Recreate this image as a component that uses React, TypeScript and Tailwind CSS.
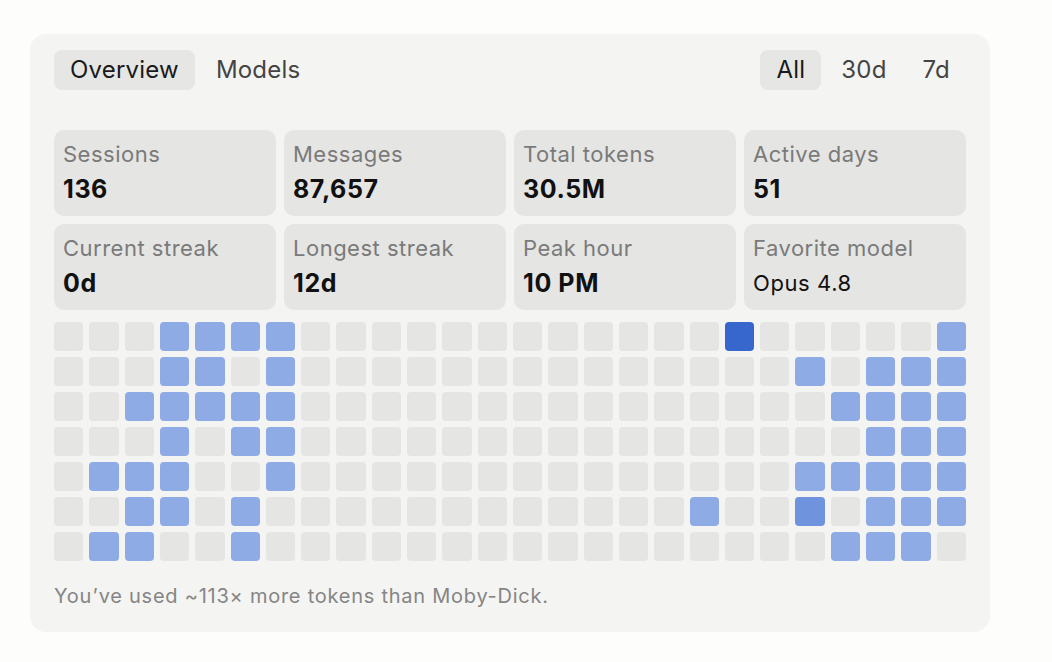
import { useState } from "react";

const FONT = "font-['Inter','Noto_Sans',sans-serif]";

// 0 = empty, 1 = light, 2 = mid, 3 = strong
const GRID: number[][] = [
  [0, 0, 0, 1, 1, 1, 1, 0, 0, 0, 0, 0, 0, 0, 0, 0, 0, 0, 0, 3, 0, 0, 0, 0, 0, 1],
  [0, 0, 0, 1, 1, 0, 1, 0, 0, 0, 0, 0, 0, 0, 0, 0, 0, 0, 0, 0, 0, 1, 0, 1, 1, 1],
  [0, 0, 1, 1, 1, 1, 1, 0, 0, 0, 0, 0, 0, 0, 0, 0, 0, 0, 0, 0, 0, 0, 1, 1, 1, 1],
  [0, 0, 0, 1, 0, 1, 1, 0, 0, 0, 0, 0, 0, 0, 0, 0, 0, 0, 0, 0, 0, 0, 0, 1, 1, 1],
  [0, 1, 1, 1, 0, 0, 1, 0, 0, 0, 0, 0, 0, 0, 0, 0, 0, 0, 0, 0, 0, 1, 1, 1, 1, 1],
  [0, 0, 1, 1, 0, 1, 0, 0, 0, 0, 0, 0, 0, 0, 0, 0, 0, 0, 1, 0, 0, 2, 0, 1, 1, 1],
  [0, 1, 1, 0, 0, 1, 0, 0, 0, 0, 0, 0, 0, 0, 0, 0, 0, 0, 0, 0, 0, 0, 1, 1, 1, 0],
];

const SHADES = ["bg-[#e5e5e3]", "bg-[#8eabe5]", "bg-[#6f94dd]", "bg-[#3767cc]"];

const STATS = [
  { label: "Sessions", value: "136" },
  { label: "Messages", value: "87,657" },
  { label: "Total tokens", value: "30.5M" },
  { label: "Active days", value: "51" },
  { label: "Current streak", value: "0d" },
  { label: "Longest streak", value: "12d" },
  { label: "Peak hour", value: "10 PM" },
  { label: "Favorite model", value: "Opus 4.8", plain: true },
];

const Tab = ({ label, active, onClick }: { label: string; active: boolean; onClick: () => void }) => (
  <button
    onClick={onClick}
    className={`h-10 px-4 rounded-lg text-[24px] tracking-[0.2px] leading-none ${
      active ? "bg-[#e6e6e4] text-[#1a1a1a]" : "text-[#444]"
    }`}
  >
    {label}
  </button>
);

const App = () => {
  const [view, setView] = useState("Overview");
  const [range, setRange] = useState("All");

  return (
    <div className={`min-h-screen w-full bg-[#fdfdfc] pt-[34px] pl-[30px] ${FONT}`}>
      <div className="w-[960px] h-[598px] rounded-2xl bg-[#f4f4f2] px-6 pt-4">
        <div className="flex items-center justify-between">
          <div className="flex gap-[5px]">
            {["Overview", "Models"].map((t) => (
              <Tab key={t} label={t} active={view === t} onClick={() => setView(t)} />
            ))}
          </div>
          <div className="flex gap-[4px]">
            {["All", "30d", "7d"].map((t) => (
              <Tab key={t} label={t} active={range === t} onClick={() => setRange(t)} />
            ))}
          </div>
        </div>

        <div className="mt-10 grid grid-cols-4 gap-2">
          {STATS.map((s) => (
            <div key={s.label} className="h-[86px] rounded-[10px] bg-[#e5e5e3] pl-[9px] pt-[10px]">
              <div className="text-[22px] tracking-[0.5px] leading-7 text-[#7a7a7a]">{s.label}</div>
              <div
                className={`mt-[7px] leading-7 text-[#111] ${
                  s.plain ? "text-[22px] tracking-[0.6px]" : "text-[25px] font-bold tracking-[0.6px]"
                }`}
              >
                {s.value}
              </div>
            </div>
          ))}
        </div>

        <div className="mt-3 grid grid-cols-[repeat(26,minmax(0,1fr))] gap-[6px]">
          {GRID.flatMap((row, r) =>
            row.map((v, c) => <div key={`${r}-${c}`} className={`h-[29px] rounded-[4px] ${SHADES[v]}`} />)
          )}
        </div>

        <p className="mt-[21px] text-[20px] tracking-[0.75px] leading-7 text-[#858585]">
          You’ve used ~113× more tokens than Moby-Dick.
        </p>
      </div>
    </div>
  );
};

export default App;
